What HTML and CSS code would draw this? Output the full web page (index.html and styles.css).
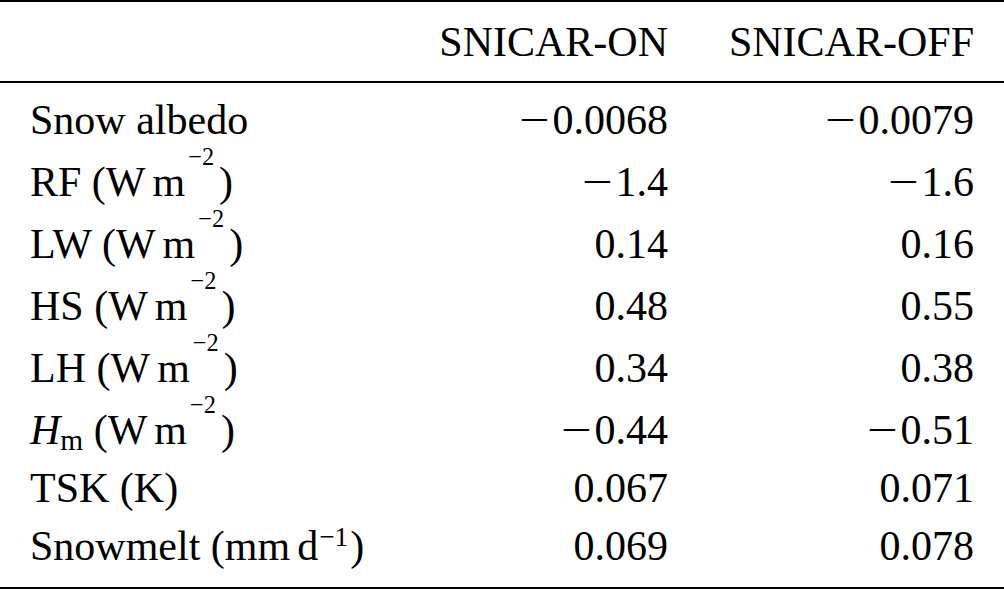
FILE: index.html
```html
<!DOCTYPE html>
<html>
<head>
<meta charset="utf-8">
<link rel="stylesheet" href="styles.css">
</head>
<body>
<table class="tbl">
  <colgroup>
    <col class="c-label">
    <col class="c-on">
    <col class="c-off">
  </colgroup>
  <thead>
    <tr class="head">
      <th class="label"></th>
      <th class="num">SNICAR-ON</th>
      <th class="num last">SNICAR-OFF</th>
    </tr>
  </thead>
  <tbody>
    <tr class="first">
      <td class="label">Snow albedo</td>
      <td class="num"><span class="neg">−</span>0.0068</td>
      <td class="num last"><span class="neg">−</span>0.0079</td>
    </tr>
    <tr class="tall">
      <td class="label">RF (W<span class="thin">m</span><span class="sup">−2</span>)</td>
      <td class="num"><span class="neg">−</span>1.4</td>
      <td class="num last"><span class="neg">−</span>1.6</td>
    </tr>
    <tr class="tall">
      <td class="label">LW (W<span class="thin">m</span><span class="sup">−2</span>)</td>
      <td class="num">0.14</td>
      <td class="num last">0.16</td>
    </tr>
    <tr class="tall">
      <td class="label">HS (W<span class="thin">m</span><span class="sup">−2</span>)</td>
      <td class="num">0.48</td>
      <td class="num last">0.55</td>
    </tr>
    <tr class="tall">
      <td class="label">LH (W<span class="thin">m</span><span class="sup">−2</span>)</td>
      <td class="num">0.34</td>
      <td class="num last">0.38</td>
    </tr>
    <tr class="tall">
      <td class="label"><i>H</i><span class="sub">m</span> (W<span class="thin">m</span><span class="sup">−2</span>)</td>
      <td class="num"><span class="neg">−</span>0.44</td>
      <td class="num last"><span class="neg">−</span>0.51</td>
    </tr>
    <tr>
      <td class="label">TSK (K)</td>
      <td class="num">0.067</td>
      <td class="num last">0.071</td>
    </tr>
    <tr class="final">
      <td class="label">Snowmelt (mm<span class="thin">d</span><span class="sup low">−1</span>)</td>
      <td class="num">0.069</td>
      <td class="num last">0.078</td>
    </tr>
  </tbody>
</table>
</body>
</html>
```

FILE: styles.css
```css
html, body {
  margin: 0;
  padding: 0;
  background: #ffffff;
}

body {
  font-family: "Liberation Serif", "Times New Roman", serif;
  font-size: 42px;
  color: #000000;
}

.tbl {
  width: 1004px;
  border-collapse: collapse;
  table-layout: fixed;
}

.c-label { width: 418px; }
.c-on { width: 250px; }
.c-off { width: 336px; }

.tbl th,
.tbl td {
  font-family: "Liberation Serif", "Times New Roman", serif;
  font-weight: normal;
  line-height: 58px;
  padding: 0;
  white-space: nowrap;
}

.tbl thead tr {
  border-top: 2px solid #000;
  border-bottom: 2px solid #000;
}

.tbl tbody {
  border-bottom: 2px solid #000;
}

.head th {
  padding-top: 11px;
  padding-bottom: 10px;
}

.label {
  text-align: left;
  padding-left: 30px !important;
}

.num {
  text-align: right;
}

.num.last {
  padding-right: 30px !important;
}

.first td {
  padding-top: 8px;
}

.tall td {
  padding-top: 4px;
}

.final td {
  padding-bottom: 12px;
}

.neg {
  display: inline-block;
  transform: scaleX(1.3);
  transform-origin: left center;
  padding-right: 10px;
}

.thin {
  margin-left: 7px;
}

.sup {
  font-size: 0.58em;
  vertical-align: 31px;
  line-height: 0;
  margin-left: 3px;
  margin-right: 5px;
}

.sup.low {
  vertical-align: 14px;
  font-size: 0.65em;
  margin-left: 1px;
  margin-right: 2px;
}

.sub {
  font-size: 0.7em;
  vertical-align: -6px;
  line-height: 0;
}
```
